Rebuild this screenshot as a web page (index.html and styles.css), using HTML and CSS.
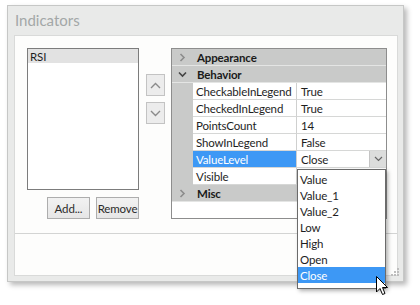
FILE: index.html
```html
<!DOCTYPE html>
<html>
<head>
    <meta charset="UTF-8">
    <title>Indicators</title>
    <link rel="stylesheet" href="styles.css">
</head>
<body>
    <div class="window">
        <div class="title">Indicators</div>
        <div class="panel">
            <div class="editor">
                <div class="left">
                    <div class="list">
                        <div class="list-item selected">RSI</div>
                    </div>
                    <div class="list-buttons">
                        <button class="btn">Add...</button>
                        <button class="btn">Remove</button>
                    </div>
                </div>
                <div class="arrows">
                    <button class="arrow">
                        <svg width="11" height="7" viewBox="0 0 11 7"><path d="M1 6 L5.5 1.5 L10 6" fill="none" stroke="#8a8a8a" stroke-width="1.4"/></svg>
                    </button>
                    <button class="arrow">
                        <svg width="11" height="7" viewBox="0 0 11 7"><path d="M1 1 L5.5 5.5 L10 1" fill="none" stroke="#8a8a8a" stroke-width="1.4"/></svg>
                    </button>
                </div>
                <div class="grid">
                    <div class="row category">
                        <div class="gutter">
                            <svg width="7" height="9" viewBox="0 0 7 9"><path d="M1.5 1 L5 4.5 L1.5 8" fill="none" stroke="#8c8c8c" stroke-width="1.6"/></svg>
                        </div>
                        <div class="cat-name">Appearance</div>
                    </div>
                    <div class="row category">
                        <div class="gutter">
                            <svg width="9" height="7" viewBox="0 0 9 7"><path d="M1 1.5 L4.5 5 L8 1.5" fill="none" stroke="#444" stroke-width="1.6"/></svg>
                        </div>
                        <div class="cat-name">Behavior</div>
                    </div>
                    <div class="row prop">
                        <div class="gutter"></div>
                        <div class="name">CheckableInLegend</div>
                        <div class="value">True</div>
                    </div>
                    <div class="row prop">
                        <div class="gutter"></div>
                        <div class="name">CheckedInLegend</div>
                        <div class="value">True</div>
                    </div>
                    <div class="row prop">
                        <div class="gutter"></div>
                        <div class="name">PointsCount</div>
                        <div class="value">14</div>
                    </div>
                    <div class="row prop">
                        <div class="gutter"></div>
                        <div class="name">ShowInLegend</div>
                        <div class="value">False</div>
                    </div>
                    <div class="row prop">
                        <div class="gutter"></div>
                        <div class="name active">ValueLevel</div>
                        <div class="value">
                            <span class="value-text">Close</span>
                            <span class="combo-btn">
                                <svg width="9" height="6" viewBox="0 0 9 6"><path d="M1 1 L4.5 4.5 L8 1" fill="none" stroke="#666" stroke-width="1.2"/></svg>
                            </span>
                        </div>
                    </div>
                    <div class="row prop">
                        <div class="gutter"></div>
                        <div class="name">Visible</div>
                        <div class="value"></div>
                    </div>
                    <div class="row category">
                        <div class="gutter">
                            <svg width="7" height="9" viewBox="0 0 7 9"><path d="M1.5 1 L5 4.5 L1.5 8" fill="none" stroke="#8c8c8c" stroke-width="1.6"/></svg>
                        </div>
                        <div class="cat-name">Misc</div>
                    </div>

                    <!-- open combo box popup -->
                    <div class="popup">
                        <div class="option">Value</div>
                        <div class="option">Value_1</div>
                        <div class="option">Value_2</div>
                        <div class="option">Low</div>
                        <div class="option">High</div>
                        <div class="option">Open</div>
                        <div class="option selected">Close</div>
                    </div>
                </div>
            </div>
            <div class="footer"></div>
        </div>
        <svg class="grip" width="8" height="8" viewBox="0 0 8 8">
            <rect x="6" y="0" width="2" height="2" fill="#bdbdbd"/>
            <rect x="3" y="3" width="2" height="2" fill="#bdbdbd"/>
            <rect x="6" y="3" width="2" height="2" fill="#bdbdbd"/>
            <rect x="0" y="6" width="2" height="2" fill="#bdbdbd"/>
            <rect x="3" y="6" width="2" height="2" fill="#bdbdbd"/>
            <rect x="6" y="6" width="2" height="2" fill="#bdbdbd"/>
        </svg>
    </div>
    <svg class="cursor" width="13" height="20" viewBox="0 0 13 20">
        <path d="M0.5 0.5 L0.5 16 L4 12.5 L6.5 18.5 L9 17.5 L6.5 11.5 L11.5 11.5 Z" fill="#fff" stroke="#000" stroke-width="1"/>
    </svg>
</body>
</html>
```
FILE: styles.css
```css
body {
    margin: 0;
    background-color: #ffffff;
    font-family: Lato, "Open Sans", sans-serif;
    font-size: 11.5px;
    letter-spacing: -0.15px;
    color: #1e1e1e;
    position: relative;
    height: 305px;
    overflow: hidden;
}
.window {
    position: relative;
    margin: 5px 0 0 7px;
    width: 397px;
    height: 277px;
    background-color: #e9eae9;
    border: 1px solid #c6c7c6;
    box-shadow: 3px 3px 5px rgba(0, 0, 0, 0.28);
    padding: 0 5px 5px 6px;
    box-sizing: border-box;
    display: flex;
    flex-direction: column;
}
.title {
    height: 29px;
    line-height: 29px;
    padding-left: 1px;
    font-size: 15px;
    letter-spacing: 0;
    color: #a3a7a7;
}
.panel {
    flex: 1;
    background-color: #fdfdfc;
    border: 1px solid #d9dad9;
    display: flex;
    flex-direction: column;
}
.editor {
    display: flex;
    padding: 12px 0 0 12px;
    height: 185px;
    border-bottom: 1px solid #d3d4d3;
}
.left {
    width: 112px;
    display: flex;
    flex-direction: column;
}
.list {
    height: 142px;
    border: 1px solid #7c7c7c;
    background-color: #ffffff;
    box-sizing: border-box;
}
.list-item {
    height: 14px;
    line-height: 15px;
    padding-left: 2px;
}
.list-item.selected {
    background-color: #e2e2e2;
}
.list-buttons {
    display: flex;
    justify-content: flex-end;
    gap: 6px;
    margin-top: 7px;
}
.btn {
    width: 43px;
    height: 22px;
    padding: 0;
    border: 1px solid #adadad;
    background: linear-gradient(#f2f2f2, #e6e6e6);
    font-family: Lato, "Open Sans", sans-serif;
    font-size: 11.5px;
    letter-spacing: -0.15px;
    color: #2a2a2a;
}
.arrows {
    display: flex;
    flex-direction: column;
    gap: 6px;
    margin: 26px 6px 0 7px;
}
.arrow {
    width: 19px;
    height: 22px;
    padding: 0;
    border: 1px solid #c3c3c3;
    background-color: #ececec;
    display: flex;
    align-items: center;
    justify-content: center;
}
.grid {
    position: relative;
    width: 216px;
    height: 171px;
    border: 1px solid #8d8d8d;
    background-color: #ffffff;
    box-sizing: border-box;
}
.row {
    display: flex;
    height: 17px;
    box-sizing: border-box;
}
.gutter {
    width: 21px;
    display: flex;
    align-items: center;
    justify-content: center;
    background-color: #c9cac9;
}
.category {
    background-color: #c9cac9;
    border-bottom: 1px solid #e4e5e4;
}
.cat-name {
    padding-left: 4px;
    line-height: 17px;
    font-weight: bold;
    color: #1a1a1a;
}
.prop .gutter {
    border-bottom: 1px solid #c9cac9;
}
.name {
    width: 104px;
    padding-left: 3px;
    box-sizing: border-box;
    line-height: 17px;
    border-right: 1px solid #cfd0cf;
    border-bottom: 1px solid #d6d7d6;
    white-space: nowrap;
}
.name.active {
    background-color: #3d98f5;
    color: #ffffff;
}
.value {
    flex: 1;
    display: flex;
    padding-left: 4px;
    line-height: 17px;
    border-bottom: 1px solid #d6d7d6;
}
.value-text {
    flex: 1;
}
.combo-btn {
    width: 16px;
    height: 16px;
    background-color: #dcdddc;
    border-left: 1px solid #c4c4c4;
    display: flex;
    align-items: center;
    justify-content: center;
}
.popup {
    position: absolute;
    left: 125px;
    top: 120px;
    width: 89px;
    height: 120px;
    box-sizing: border-box;
    border: 1px solid #6b6b6b;
    background-color: #ffffff;
    box-shadow: 2px 2px 4px rgba(0, 0, 0, 0.3);
    padding-top: 1px;
}
.option {
    height: 16px;
    line-height: 17px;
    padding-left: 2px;
}
.option.selected {
    background-color: #3d98f5;
    color: #ffffff;
}
.footer {
    flex: 1;
}
.grip {
    position: absolute;
    right: 4px;
    bottom: 5px;
}
.cursor {
    position: absolute;
    left: 376px;
    top: 276px;
}
```
